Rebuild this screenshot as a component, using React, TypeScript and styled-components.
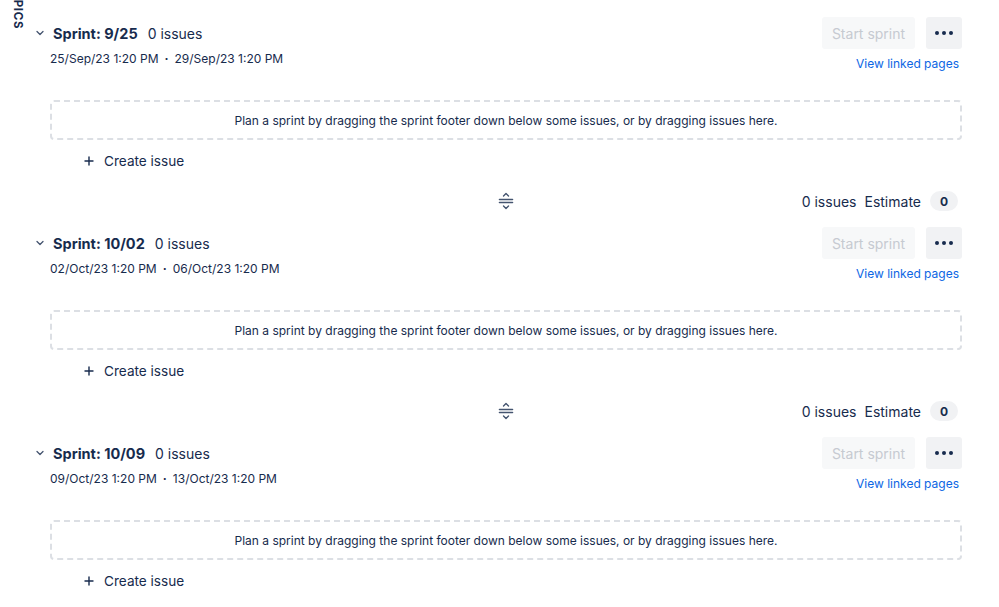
import styled, { createGlobalStyle } from 'styled-components';

const GlobalStyle = createGlobalStyle`
  html, body {
    margin: 0;
    padding: 0;
    background: #ffffff;
    overflow: hidden;
  }
  body {
    font-family: 'Inter', 'Liberation Sans', sans-serif;
    color: #172b4d;
  }
`;

const Page = styled.div`
  display: flex;
  width: 999px;
  height: 607px;
  overflow: hidden;
`;

const SideTab = styled.div`
  width: 30px;
  flex-shrink: 0;
  overflow: hidden;
`;

const SideLabel = styled.div`
  writing-mode: vertical-rl;
  margin: -8px 0 0 11px;
  font-size: 11.5px;
  font-weight: 700;
  letter-spacing: 0.06em;
  color: #172b4d;
`;

const Board = styled.div`
  flex: 1;
  display: flex;
  flex-direction: column;
  padding: 17px 37px 0 0;
`;

const Sprint = styled.section`
  display: flex;
  flex-direction: column;
  margin-bottom: 10px;
`;

const Header = styled.div`
  display: flex;
  justify-content: space-between;
  align-items: flex-start;
`;

const HeaderLeft = styled.div`
  display: flex;
  flex-direction: column;
`;

const TitleRow = styled.div`
  display: flex;
  align-items: center;
  height: 32px;
`;

const Chevron = styled.span`
  width: 20px;
  display: flex;
  justify-content: center;
  color: #44546f;
`;

const Title = styled.h3`
  margin: 0 0 0 3px;
  font-size: 14.5px;
  font-weight: 700;
  color: #172b4d;
`;

const Count = styled.span`
  margin-left: 10px;
  font-size: 14px;
  color: #172b4d;
`;

const Dates = styled.div`
  margin: 2px 0 0 20px;
  font-size: 12px;
  line-height: 16px;
  color: #172b4d;
`;

const Dot = styled.span`
  margin: 0 6px;
  font-weight: 700;
`;

const HeaderRight = styled.div`
  display: flex;
  flex-direction: column;
  align-items: flex-end;
`;

const Actions = styled.div`
  display: flex;
  gap: 11px;
`;

const StartButton = styled.button`
  height: 32px;
  width: 93px;
  border: none;
  border-radius: 3px;
  background: #f7f8f9;
  color: #c6cad1;
  font-family: inherit;
  font-size: 14px;
`;

const MoreButton = styled.button`
  height: 32px;
  width: 36px;
  border: none;
  border-radius: 3px;
  background: #f1f2f4;
  display: flex;
  align-items: center;
  justify-content: center;
  gap: 3px;
  padding: 0;
`;

const MoreDot = styled.span`
  width: 4px;
  height: 4px;
  border-radius: 50%;
  background: #172b4d;
`;

const LinkedPages = styled.a`
  margin: 7px 3px 0 0;
  font-size: 12px;
  line-height: 16px;
  color: #0c66e4;
  text-decoration: none;
`;

const DropZone = styled.div`
  margin: 28px 0 0 20px;
  height: 40px;
  box-sizing: border-box;
  border: 2px dashed #dcdfe4;
  border-radius: 4px;
  display: flex;
  align-items: center;
  justify-content: center;
  font-size: 12px;
  color: #172b4d;
`;

const CreateRow = styled.div`
  margin: 5px 0 0 53px;
  height: 32px;
  display: flex;
  align-items: center;
  gap: 9px;
  font-size: 13.6px;
  color: #172b4d;
`;

const Footer = styled.div`
  margin: 8px 0 0 20px;
  height: 32px;
  display: grid;
  grid-template-columns: 1fr auto 1fr;
  align-items: center;
`;

const HandleCell = styled.span`
  grid-column: 2;
  display: flex;
`;

const FooterInfo = styled.div`
  grid-column: 3;
  justify-self: end;
  display: flex;
  align-items: center;
  padding-right: 4px;
  font-size: 14px;
  color: #172b4d;
`;

const EstimateLabel = styled.span`
  margin-left: 8px;
`;

const Badge = styled.span`
  margin-left: 9px;
  min-width: 28px;
  height: 20px;
  border-radius: 10px;
  background: #f1f2f4;
  display: flex;
  align-items: center;
  justify-content: center;
  font-size: 12px;
  font-weight: 700;
`;

const ChevronDown = () => (
  <svg width="10" height="10" viewBox="0 0 10 10" fill="none">
    <path d="M2 3.5 L5 6.5 L8 3.5" stroke="currentColor" strokeWidth="1.3" strokeLinecap="round" strokeLinejoin="round" />
  </svg>
);

const DragHandle = () => (
  <svg width="16" height="18" viewBox="0 0 16 18" fill="none" stroke="#44546f" strokeLinecap="round" strokeLinejoin="round">
    <path d="M5.5 4 L8 1.5 L10.5 4" strokeWidth="1.4" />
    <path d="M1.5 7.5 H14.5 M1.5 10.5 H14.5" strokeWidth="1.6" />
    <path d="M5.5 14 L8 16.5 L10.5 14" strokeWidth="1.4" />
  </svg>
);

const PlusIcon = () => (
  <svg width="12" height="12" viewBox="0 0 12 12" fill="none" stroke="#172b4d" strokeWidth="1.4" strokeLinecap="round">
    <path d="M6 2 V10 M2 6 H10" />
  </svg>
);

const sprints = [
  { name: '9/25', start: '25/Sep/23 1:20 PM', end: '29/Sep/23 1:20 PM' },
  { name: '10/02', start: '02/Oct/23 1:20 PM', end: '06/Oct/23 1:20 PM' },
  { name: '10/09', start: '09/Oct/23 1:20 PM', end: '13/Oct/23 1:20 PM' },
];

export default function App() {
  return (
    <>
      <GlobalStyle />
      <Page>
        <SideTab>
          <SideLabel>EPICS</SideLabel>
        </SideTab>
        <Board>
          {sprints.map((sprint, index) => (
            <Sprint key={sprint.name}>
              <Header>
                <HeaderLeft>
                  <TitleRow>
                    <Chevron>
                      <ChevronDown />
                    </Chevron>
                    <Title>Sprint: {sprint.name}</Title>
                    <Count>0 issues</Count>
                  </TitleRow>
                  <Dates>
                    {sprint.start}
                    <Dot>·</Dot>
                    {sprint.end}
                  </Dates>
                </HeaderLeft>
                <HeaderRight>
                  <Actions>
                    <StartButton disabled>Start sprint</StartButton>
                    <MoreButton>
                      <MoreDot />
                      <MoreDot />
                      <MoreDot />
                    </MoreButton>
                  </Actions>
                  <LinkedPages href="#">View linked pages</LinkedPages>
                </HeaderRight>
              </Header>
              <DropZone>
                Plan a sprint by dragging the sprint footer down below some issues, or by dragging issues here.
              </DropZone>
              <CreateRow>
                <PlusIcon />
                Create issue
              </CreateRow>
              {index < sprints.length - 1 && (
                <Footer>
                  <HandleCell>
                    <DragHandle />
                  </HandleCell>
                  <FooterInfo>
                    0 issues
                    <EstimateLabel>Estimate</EstimateLabel>
                    <Badge>0</Badge>
                  </FooterInfo>
                </Footer>
              )}
            </Sprint>
          ))}
        </Board>
      </Page>
    </>
  );
}
